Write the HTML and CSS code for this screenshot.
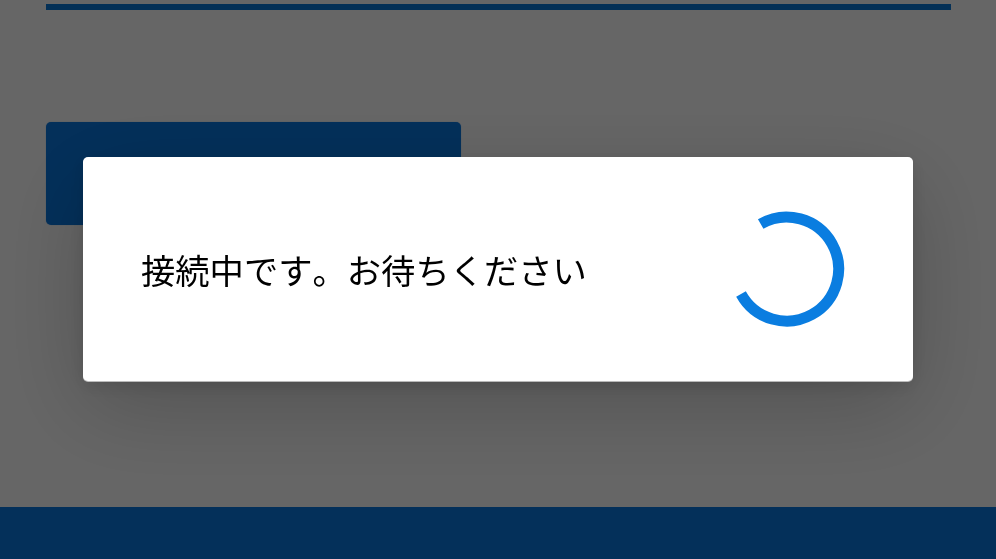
FILE: index.html
```html
<!DOCTYPE html>
<html lang="ja">
<head>
<meta charset="utf-8">
<title>接続中</title>
<link rel="stylesheet" href="styles.css">
</head>
<body>
<div class="page">
  <div class="rule"></div>
  <div class="primary-button"></div>
  <div class="footer"></div>
</div>
<div class="overlay">
  <div class="dialog">
    <p class="message">接続中です。お待ちください</p>
    <svg class="spinner" viewBox="0 0 116 116" width="116" height="116" aria-hidden="true">
      <path class="spinner-arc" d="M31.7 13 A52 52 0 1 1 12 83"></path>
    </svg>
  </div>
</div>
</body>
</html>
```
FILE: styles.css
```css
html, body {
  margin: 0;
  height: 100%;
  overflow: hidden;
  background: #fff;
  font-family: "Noto Sans CJK JP", "Noto Sans", sans-serif;
}
.page {
  height: 559px;
  box-sizing: border-box;
  padding-top: 4px;
  display: flex;
  flex-direction: column;
}
.rule {
  height: 6px;
  margin: 0 45px 0 46px;
  background: #0b78d8;
}
.primary-button {
  width: 415px;
  height: 103px;
  margin: 112px 0 0 46px;
  border-radius: 5px;
  background: #0a78e0;
  box-shadow: 0 0 1px rgba(11, 120, 224, 0.5);
}
.footer {
  height: 52px;
  margin-top: auto;
  background: #0a78e0;
}
.overlay {
  position: fixed;
  inset: 0;
  padding-bottom: 21px;
  box-sizing: border-box;
  display: flex;
  align-items: center;
  justify-content: center;
  background: rgba(0, 0, 0, 0.6);
}
.dialog {
  width: 830px;
  height: 224px;
  box-sizing: border-box;
  padding: 0 68px 0 58px;
  display: flex;
  align-items: center;
  justify-content: space-between;
  border-radius: 5px;
  background: #fff;
  box-shadow: 0 1px 0 rgba(255, 255, 255, 0.6), 0 26px 90px rgba(0, 0, 0, 0.2), 0 5px 18px rgba(0, 0, 0, 0.12);
}
.message {
  margin: 0;
  font-size: 34.3px;
  font-weight: 400;
  font-kerning: none;
  line-height: 48px;
  color: #000;
}
.spinner {
  display: block;
  flex: none;
}
.spinner-arc {
  fill: none;
  stroke: #0a7de0;
  stroke-width: 11;
}
```
